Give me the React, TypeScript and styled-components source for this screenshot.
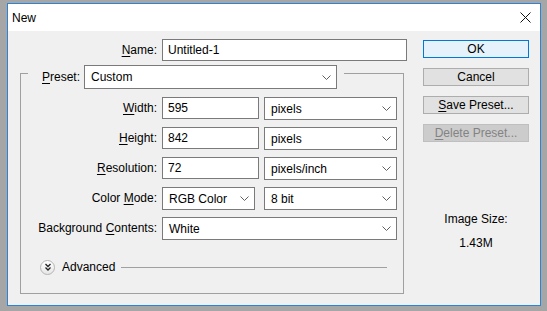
import React from "react";
import styled, { createGlobalStyle } from "styled-components";

const Global = createGlobalStyle`
  html, body { margin: 0; padding: 0; }
  body {
    background: #a6a6a6;
    font-family: "Liberation Sans", Arial, sans-serif;
    font-size: 12px;
    color: #000;
  }
`;

const Page = styled.div`
  padding: 3px 0 0 7px;
  width: 547px;
  height: 311px;
  box-sizing: border-box;
`;

const Window = styled.div`
  width: 534px;
  height: 303px;
  box-sizing: border-box;
  border: 1px solid #2b84d6;
  display: flex;
  flex-direction: column;
  background: #f0f0f0;
`;

const TitleBar = styled.div`
  height: 27px;
  background: #fff;
  display: flex;
  align-items: center;
  justify-content: space-between;
  padding-left: 4px;
  flex-shrink: 0;
`;

const Title = styled.span`
  font-size: 12px;
`;

const CloseBox = styled.div`
  width: 30px;
  height: 27px;
  display: flex;
  align-items: center;
  justify-content: center;
`;

const Body = styled.div`
  flex: 1;
  display: flex;
  padding-top: 8px;
`;

const LeftCol = styled.div`
  width: 400px;
  display: flex;
  flex-direction: column;
`;

const NameRow = styled.div`
  display: flex;
  align-items: center;
  gap: 5px;
`;

const Label = styled.label<{ $w: number }>`
  width: ${(p) => p.$w}px;
  text-align: right;
  white-space: nowrap;
  line-height: 22px;
  flex-shrink: 0;
`;

const Mn = styled.span`
  text-decoration: underline;
  text-underline-offset: 2px;
`;

const TextBox = styled.div<{ $w: number }>`
  width: ${(p) => p.$w}px;
  height: 22px;
  box-sizing: border-box;
  border: 1px solid #7a7a7a;
  background: #fff;
  padding-left: 5px;
  display: flex;
  align-items: center;
`;

const Select = styled.div<{ $w: number; $h?: number }>`
  width: ${(p) => p.$w}px;
  height: ${(p) => p.$h ?? 23}px;
  box-sizing: border-box;
  border: 1px solid #7a7a7a;
  background: #fff;
  padding: 0 5px 0 6px;
  display: flex;
  align-items: center;
  justify-content: space-between;
  flex-shrink: 0;
`;

const GroupBox = styled.div`
  margin: 12px 0 0 12px;
  width: 384px;
  height: 221px;
  box-sizing: border-box;
  border: 1px solid #a0a0a0;
  display: flex;
  flex-direction: column;
`;

const PresetRow = styled.div`
  margin: -9px 0 0 7px;
  padding: 0 7px 0 14px;
  background: #f0f0f0;
  display: flex;
  align-items: center;
  gap: 4px;
  width: fit-content;
`;

const Rows = styled.div`
  margin-top: 8px;
  display: grid;
  row-gap: 7px;
`;

const Row = styled.div`
  display: flex;
  align-items: flex-start;
  gap: 5px;
  height: 23px;
`;

const Pair = styled.div<{ $gap: number }>`
  display: flex;
  gap: ${(p) => p.$gap}px;
`;

const AdvancedRow = styled.div`
  margin: 20px 16px 0 19px;
  display: flex;
  align-items: center;
  height: 14px;
`;

const AdvIcon = styled.div`
  width: 15px;
  height: 15px;
  box-sizing: border-box;
  border-radius: 50%;
  border: 1px solid #b4b4b4;
  background: linear-gradient(#ffffff, #e6e6e6);
  display: flex;
  align-items: center;
  justify-content: center;
  flex-shrink: 0;
`;

const AdvText = styled.span`
  margin-left: 7px;
`;

const Rule = styled.div`
  flex: 1;
  height: 1px;
  background: #a0a0a0;
  margin-left: 6px;
`;

const RightCol = styled.div`
  margin-left: 15px;
  width: 106px;
  display: flex;
  flex-direction: column;
  padding-top: 1px;
`;

const Button = styled.div<{ $kind?: "default" | "normal" | "disabled" }>`
  height: 18px;
  box-sizing: border-box;
  margin-bottom: 10px;
  display: flex;
  align-items: center;
  justify-content: center;
  border: 1px solid
    ${(p) =>
      p.$kind === "default" ? "#0078d7" : p.$kind === "disabled" ? "#bfbfbf" : "#adadad"};
  background: ${(p) =>
    p.$kind === "default" ? "#e5f1fb" : p.$kind === "disabled" ? "#cccccc" : "#e1e1e1"};
  color: ${(p) => (p.$kind === "disabled" ? "#838383" : "#000")};
`;

const SizeInfo = styled.div`
  margin-top: 60px;
  display: flex;
  flex-direction: column;
  align-items: center;
  gap: 9px;
  line-height: 15px;
`;

const Chevron = () => (
  <svg width="9" height="5" viewBox="0 0 9 5">
    <polyline points="0.5,0.5 4.5,4.5 8.5,0.5" fill="none" stroke="#606060" strokeWidth="1" />
  </svg>
);

const CloseIcon = () => (
  <svg width="11" height="11" viewBox="0 0 11 11">
    <path d="M0.5 0.5 L10.5 10.5 M10.5 0.5 L0.5 10.5" stroke="#111" strokeWidth="1" />
  </svg>
);

const DoubleChevron = () => (
  <svg width="8" height="8" viewBox="0 0 8 8">
    <polyline points="1.5,1 4,3.5 6.5,1" fill="none" stroke="#222" strokeWidth="1.3" />
    <polyline points="1.5,4.5 4,7 6.5,4.5" fill="none" stroke="#222" strokeWidth="1.3" />
  </svg>
);

const Sel: React.FC<{ w: number; h?: number; children: React.ReactNode }> = ({ w, h, children }) => (
  <Select $w={w} $h={h}>
    <span>{children}</span>
    <Chevron />
  </Select>
);

export default function App() {
  return (
    <>
      <Global />
      <Page>
        <Window>
          <TitleBar>
            <Title>New</Title>
            <CloseBox>
              <CloseIcon />
            </CloseBox>
          </TitleBar>
          <Body>
            <LeftCol>
              <NameRow>
                <Label $w={149}>
                  <Mn>N</Mn>ame:
                </Label>
                <TextBox $w={245}>Untitled-1</TextBox>
              </NameRow>
              <GroupBox>
                <PresetRow>
                  <span>
                    <Mn>P</Mn>reset:
                  </span>
                  <Sel w={253} h={24}>
                    Custom
                  </Sel>
                </PresetRow>
                <Rows>
                  <Row>
                    <Label $w={136}>
                      <Mn>W</Mn>idth:
                    </Label>
                    <Pair $gap={5}>
                      <TextBox $w={97}>595</TextBox>
                      <Sel w={133}>pixels</Sel>
                    </Pair>
                  </Row>
                  <Row>
                    <Label $w={136}>
                      <Mn>H</Mn>eight:
                    </Label>
                    <Pair $gap={5}>
                      <TextBox $w={97}>842</TextBox>
                      <Sel w={133}>pixels</Sel>
                    </Pair>
                  </Row>
                  <Row>
                    <Label $w={136}>
                      <Mn>R</Mn>esolution:
                    </Label>
                    <Pair $gap={5}>
                      <TextBox $w={97}>72</TextBox>
                      <Sel w={133}>pixels/inch</Sel>
                    </Pair>
                  </Row>
                  <Row>
                    <Label $w={136}>
                      Color <Mn>M</Mn>ode:
                    </Label>
                    <Pair $gap={9}>
                      <Sel w={93}>RGB Color</Sel>
                      <Sel w={133}>8 bit</Sel>
                    </Pair>
                  </Row>
                  <Row>
                    <Label $w={136}>
                      Background <Mn>C</Mn>ontents:
                    </Label>
                    <Sel w={235}>White</Sel>
                  </Row>
                </Rows>
                <AdvancedRow>
                  <AdvIcon>
                    <DoubleChevron />
                  </AdvIcon>
                  <AdvText>Advanced</AdvText>
                  <Rule />
                </AdvancedRow>
              </GroupBox>
            </LeftCol>
            <RightCol>
              <Button $kind="default">OK</Button>
              <Button>Cancel</Button>
              <Button>
                <span>
                  <Mn>S</Mn>ave Preset...
                </span>
              </Button>
              <Button $kind="disabled">
                <span>
                  <Mn>D</Mn>elete Preset...
                </span>
              </Button>
              <SizeInfo>
                <span>Image Size:</span>
                <span>1.43M</span>
              </SizeInfo>
            </RightCol>
          </Body>
        </Window>
      </Page>
    </>
  );
}
